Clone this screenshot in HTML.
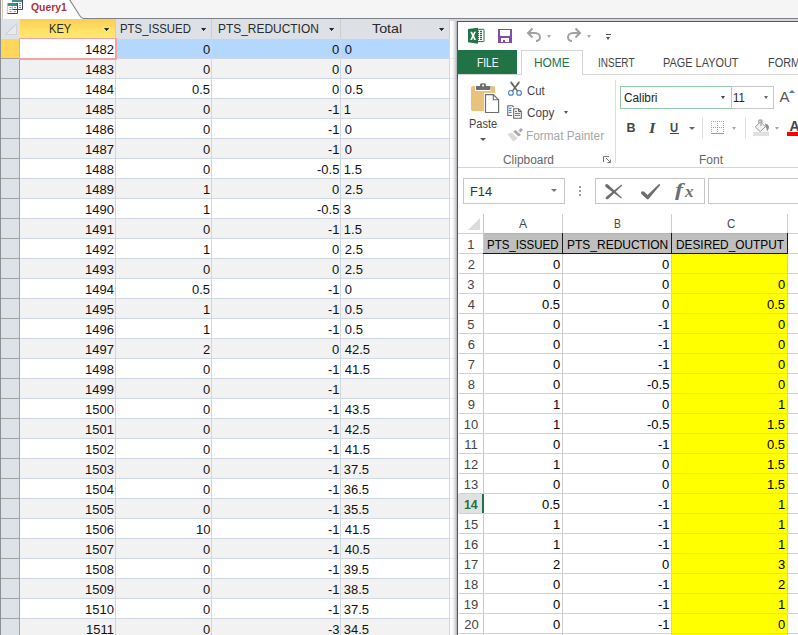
<!DOCTYPE html>
<html><head><meta charset="utf-8">
<style>
*{margin:0;padding:0;box-sizing:border-box}
html,body{width:798px;height:635px;overflow:hidden;background:#fff;font-family:"Liberation Sans",sans-serif;position:relative}
div,svg{position:absolute}
.t{white-space:nowrap;line-height:normal;transform-origin:0 0;font-family:"Liberation Sans",sans-serif}
/* ACCESS */
.ab{left:1px;width:449px;height:20px}
.rsel{left:1px;width:19px;height:20px}
.hl{left:20px;width:430px;height:1px;background:#cfd7e4}
.hls{left:1px;width:19px;height:1px;background:#a3a3a3}
.vl{top:38px;width:1px;height:597px;background:#cfd7e4}
.hdr{top:19px;height:20px;background:#dde1e6}
.dd{width:0;height:0;border-left:4px solid transparent;border-right:4px solid transparent;border-top:4px solid #2b2b2b}
/* EXCEL */
.xh{left:459px;width:339px;height:1px;background:#d2d2d2}
.xv{top:214px;width:1px;height:421px;background:#cecece}
.box{border:1px solid #c6c6c6;background:#fff}
.sm{width:0;height:0;border-left:2.5px solid transparent;border-right:2.5px solid transparent;border-top:3px solid #777}
</style></head><body>
<!-- ================= ACCESS ================= -->
<div style="left:0;top:0;width:798px;height:19px;background:#f5f5f5"></div>
<!-- tab -->
<svg style="left:0;top:0" width="100" height="19" viewBox="0 0 100 19">
  <path d="M2 0 V19 H84 C82 18.5 81 17.5 80 16 L69.5 -0.5 Z" fill="#ffffff"/>
  <path d="M69.5 -0.5 L80 16 C81 17.5 82 18.5 84 18.5 H100" fill="none" stroke="#80858b" stroke-width="1.1"/>
  <line x1="2.5" y1="0" x2="2.5" y2="19" stroke="#d9c7ad" stroke-width="1"/>
</svg>
<!-- query icon -->
<svg style="left:0;top:0" width="28" height="16" viewBox="0 0 28 16">
  <rect x="12" y="0" width="11" height="10" fill="#fff"/>
  <rect x="12" y="0" width="11" height="2" fill="#3f8f8c"/>
  <path d="M12.5 2 V9.5" stroke="#c4ccd6" stroke-width="1"/>
  <path d="M22.5 0 V9.5 H12" fill="none" stroke="#2e4a5c" stroke-width="1"/>
  <path d="M19 3.5h2M19 5.5h2M19 7.5h2" stroke="#8796aa" stroke-width="1"/>
  <rect x="7" y="3" width="11" height="11" fill="#fff" fill-opacity="0.9"/>
  <rect x="7.5" y="3" width="10" height="3" fill="#3f8f8c"/>
  <path d="M7.5 6 V13.5" stroke="#c4ccd6" stroke-width="1"/>
  <path d="M17.5 3 V13.5 H7.5" fill="none" stroke="#2e4a5c" stroke-width="1"/>
  <path d="M12.5 6 V9.5" stroke="#b8c2ce" stroke-width="1"/>
  <path d="M12.5 9.5 H17" stroke="#2e4a5c" stroke-width="1"/>
  <path d="M9.5 7.5h2M14 7.5h2M9.5 9.5h2M9.5 11.5h2M14 11.5h2" stroke="#8796aa" stroke-width="1"/>
</svg>
<div style="left:100px;top:18px;width:698px;height:1px;background:#7d8187"></div>
<!-- header -->
<div class="hdr" style="left:1px;width:19px;background:#dde2e8"></div>
<svg style="left:1px;top:19px" width="19" height="19" viewBox="0 0 19 19">
  <path d="M4.5 15.5 L15.5 5 V15.5 Z" fill="#e8eaee"/>
  <path d="M4.5 15.5 L15.5 5" stroke="#8fb7e8" stroke-width="1" stroke-dasharray="1 0.6"/>
  <path d="M5 15.5 H15.5 V5.5" stroke="#cfd3d9" stroke-width="1" fill="none"/>
</svg>
<div class="hdr" style="left:20px;width:95px;background:linear-gradient(#fdcd55,#ffe266 60%,#ffec72)"></div>
<div class="hdr" style="left:116px;width:95px"></div>
<div class="hdr" style="left:212px;width:128px"></div>
<div class="hdr" style="left:341px;width:108px"></div>
<div style="left:115px;top:19px;width:1px;height:19px;background:#c9ced6"></div>
<div style="left:211px;top:19px;width:1px;height:19px;background:#c9ced6"></div>
<div style="left:340px;top:19px;width:1px;height:19px;background:#c9ced6"></div>
<div style="left:449px;top:19px;width:1px;height:19px;background:#c9ced6"></div>




<svg style="left:100.5px;top:25px" width="12" height="9" viewBox="0 0 12 9"><path d="M2 2.6 H9.2 L5.6 6.6 Z" fill="#1e1e1e" stroke="#fff" stroke-opacity="0.8" stroke-width="1"/></svg>
<svg style="left:197.5px;top:25px" width="12" height="9" viewBox="0 0 12 9"><path d="M2 2.6 H9.2 L5.6 6.6 Z" fill="#1e1e1e" stroke="#fff" stroke-opacity="0.8" stroke-width="1"/></svg>
<svg style="left:326px;top:25px" width="12" height="9" viewBox="0 0 12 9"><path d="M2 2.6 H9.2 L5.6 6.6 Z" fill="#1e1e1e" stroke="#fff" stroke-opacity="0.8" stroke-width="1"/></svg>
<svg style="left:435.5px;top:25px" width="12" height="9" viewBox="0 0 12 9"><path d="M2 2.6 H9.2 L5.6 6.6 Z" fill="#1e1e1e" stroke="#fff" stroke-opacity="0.8" stroke-width="1"/></svg>
<!-- rows -->
<div class="ab" style="top:39px;height:19px;background:#b3d7ff"></div>
<div class="rsel" style="top:39px;height:19px;background:#ffd65c"></div>
<div class="ab" style="top:58px;background:#f2f2f2"></div>
<div class="rsel" style="top:58px;height:20px;background:#dde2e8"></div>
<div class="ab" style="top:78px;background:#ffffff"></div>
<div class="rsel" style="top:78px;height:20px;background:#dde2e8"></div>
<div class="ab" style="top:98px;background:#f2f2f2"></div>
<div class="rsel" style="top:98px;height:20px;background:#dde2e8"></div>
<div class="ab" style="top:118px;background:#ffffff"></div>
<div class="rsel" style="top:118px;height:20px;background:#dde2e8"></div>
<div class="ab" style="top:138px;background:#f2f2f2"></div>
<div class="rsel" style="top:138px;height:20px;background:#dde2e8"></div>
<div class="ab" style="top:158px;background:#ffffff"></div>
<div class="rsel" style="top:158px;height:20px;background:#dde2e8"></div>
<div class="ab" style="top:178px;background:#f2f2f2"></div>
<div class="rsel" style="top:178px;height:20px;background:#dde2e8"></div>
<div class="ab" style="top:198px;background:#ffffff"></div>
<div class="rsel" style="top:198px;height:20px;background:#dde2e8"></div>
<div class="ab" style="top:218px;background:#f2f2f2"></div>
<div class="rsel" style="top:218px;height:20px;background:#dde2e8"></div>
<div class="ab" style="top:238px;background:#ffffff"></div>
<div class="rsel" style="top:238px;height:20px;background:#dde2e8"></div>
<div class="ab" style="top:258px;background:#f2f2f2"></div>
<div class="rsel" style="top:258px;height:20px;background:#dde2e8"></div>
<div class="ab" style="top:278px;background:#ffffff"></div>
<div class="rsel" style="top:278px;height:20px;background:#dde2e8"></div>
<div class="ab" style="top:298px;background:#f2f2f2"></div>
<div class="rsel" style="top:298px;height:20px;background:#dde2e8"></div>
<div class="ab" style="top:318px;background:#ffffff"></div>
<div class="rsel" style="top:318px;height:20px;background:#dde2e8"></div>
<div class="ab" style="top:338px;background:#f2f2f2"></div>
<div class="rsel" style="top:338px;height:20px;background:#dde2e8"></div>
<div class="ab" style="top:358px;background:#ffffff"></div>
<div class="rsel" style="top:358px;height:20px;background:#dde2e8"></div>
<div class="ab" style="top:378px;background:#f2f2f2"></div>
<div class="rsel" style="top:378px;height:20px;background:#dde2e8"></div>
<div class="ab" style="top:398px;background:#ffffff"></div>
<div class="rsel" style="top:398px;height:20px;background:#dde2e8"></div>
<div class="ab" style="top:418px;background:#f2f2f2"></div>
<div class="rsel" style="top:418px;height:20px;background:#dde2e8"></div>
<div class="ab" style="top:438px;background:#ffffff"></div>
<div class="rsel" style="top:438px;height:20px;background:#dde2e8"></div>
<div class="ab" style="top:458px;background:#f2f2f2"></div>
<div class="rsel" style="top:458px;height:20px;background:#dde2e8"></div>
<div class="ab" style="top:478px;background:#ffffff"></div>
<div class="rsel" style="top:478px;height:20px;background:#dde2e8"></div>
<div class="ab" style="top:498px;background:#f2f2f2"></div>
<div class="rsel" style="top:498px;height:20px;background:#dde2e8"></div>
<div class="ab" style="top:518px;background:#ffffff"></div>
<div class="rsel" style="top:518px;height:20px;background:#dde2e8"></div>
<div class="ab" style="top:538px;background:#f2f2f2"></div>
<div class="rsel" style="top:538px;height:20px;background:#dde2e8"></div>
<div class="ab" style="top:558px;background:#ffffff"></div>
<div class="rsel" style="top:558px;height:20px;background:#dde2e8"></div>
<div class="ab" style="top:578px;background:#f2f2f2"></div>
<div class="rsel" style="top:578px;height:20px;background:#dde2e8"></div>
<div class="ab" style="top:598px;background:#ffffff"></div>
<div class="rsel" style="top:598px;height:20px;background:#dde2e8"></div>
<div class="ab" style="top:618px;background:#f2f2f2"></div>
<div class="rsel" style="top:618px;height:20px;background:#dde2e8"></div>
<div class="hl" style="top:58px"></div>
<div class="hls" style="top:58px"></div>
<div class="hl" style="top:78px"></div>
<div class="hls" style="top:78px"></div>
<div class="hl" style="top:98px"></div>
<div class="hls" style="top:98px"></div>
<div class="hl" style="top:118px"></div>
<div class="hls" style="top:118px"></div>
<div class="hl" style="top:138px"></div>
<div class="hls" style="top:138px"></div>
<div class="hl" style="top:158px"></div>
<div class="hls" style="top:158px"></div>
<div class="hl" style="top:178px"></div>
<div class="hls" style="top:178px"></div>
<div class="hl" style="top:198px"></div>
<div class="hls" style="top:198px"></div>
<div class="hl" style="top:218px"></div>
<div class="hls" style="top:218px"></div>
<div class="hl" style="top:238px"></div>
<div class="hls" style="top:238px"></div>
<div class="hl" style="top:258px"></div>
<div class="hls" style="top:258px"></div>
<div class="hl" style="top:278px"></div>
<div class="hls" style="top:278px"></div>
<div class="hl" style="top:298px"></div>
<div class="hls" style="top:298px"></div>
<div class="hl" style="top:318px"></div>
<div class="hls" style="top:318px"></div>
<div class="hl" style="top:338px"></div>
<div class="hls" style="top:338px"></div>
<div class="hl" style="top:358px"></div>
<div class="hls" style="top:358px"></div>
<div class="hl" style="top:378px"></div>
<div class="hls" style="top:378px"></div>
<div class="hl" style="top:398px"></div>
<div class="hls" style="top:398px"></div>
<div class="hl" style="top:418px"></div>
<div class="hls" style="top:418px"></div>
<div class="hl" style="top:438px"></div>
<div class="hls" style="top:438px"></div>
<div class="hl" style="top:458px"></div>
<div class="hls" style="top:458px"></div>
<div class="hl" style="top:478px"></div>
<div class="hls" style="top:478px"></div>
<div class="hl" style="top:498px"></div>
<div class="hls" style="top:498px"></div>
<div class="hl" style="top:518px"></div>
<div class="hls" style="top:518px"></div>
<div class="hl" style="top:538px"></div>
<div class="hls" style="top:538px"></div>
<div class="hl" style="top:558px"></div>
<div class="hls" style="top:558px"></div>
<div class="hl" style="top:578px"></div>
<div class="hls" style="top:578px"></div>
<div class="hl" style="top:598px"></div>
<div class="hls" style="top:598px"></div>
<div class="hl" style="top:618px"></div>
<div class="hls" style="top:618px"></div>
<div class="hl" style="top:638px"></div>
<div class="hls" style="top:638px"></div>
<div class="vl" style="left:115px"></div>
<div class="vl" style="left:211px"></div>
<div class="vl" style="left:340px"></div>
<div class="vl" style="left:449px"></div>
<div style="left:19px;top:38px;width:1px;height:597px;background:#a3a3a3"></div>
<!-- selected cell -->
<div style="left:20px;top:38px;width:95px;height:20px;background:#fff"></div>
<div style="left:19px;top:38px;width:98px;height:22px;border:1px solid #f5a3a7;border-right-width:2px;border-bottom-width:2px"></div>
<div style="left:0;top:0;width:1px;height:635px;background:#8b9096"></div>
<!-- shadow gap -->
<div style="left:450px;top:19px;width:7px;height:616px;background:linear-gradient(90deg,#ffffff 0%,#fbfbfc 35%,#dedde2 70%,#b0b0b4 100%)"></div>
<div style="left:450px;top:58px;width:7px;height:1px;background:rgba(150,170,200,0.18)"></div><div style="left:450px;top:78px;width:7px;height:1px;background:rgba(150,170,200,0.18)"></div><div style="left:450px;top:98px;width:7px;height:1px;background:rgba(150,170,200,0.18)"></div><div style="left:450px;top:118px;width:7px;height:1px;background:rgba(150,170,200,0.18)"></div><div style="left:450px;top:138px;width:7px;height:1px;background:rgba(150,170,200,0.18)"></div><div style="left:450px;top:158px;width:7px;height:1px;background:rgba(150,170,200,0.18)"></div><div style="left:450px;top:178px;width:7px;height:1px;background:rgba(150,170,200,0.18)"></div><div style="left:450px;top:198px;width:7px;height:1px;background:rgba(150,170,200,0.18)"></div><div style="left:450px;top:218px;width:7px;height:1px;background:rgba(150,170,200,0.18)"></div><div style="left:450px;top:238px;width:7px;height:1px;background:rgba(150,170,200,0.18)"></div><div style="left:450px;top:258px;width:7px;height:1px;background:rgba(150,170,200,0.18)"></div><div style="left:450px;top:278px;width:7px;height:1px;background:rgba(150,170,200,0.18)"></div><div style="left:450px;top:298px;width:7px;height:1px;background:rgba(150,170,200,0.18)"></div><div style="left:450px;top:318px;width:7px;height:1px;background:rgba(150,170,200,0.18)"></div><div style="left:450px;top:338px;width:7px;height:1px;background:rgba(150,170,200,0.18)"></div><div style="left:450px;top:358px;width:7px;height:1px;background:rgba(150,170,200,0.18)"></div><div style="left:450px;top:378px;width:7px;height:1px;background:rgba(150,170,200,0.18)"></div><div style="left:450px;top:398px;width:7px;height:1px;background:rgba(150,170,200,0.18)"></div><div style="left:450px;top:418px;width:7px;height:1px;background:rgba(150,170,200,0.18)"></div><div style="left:450px;top:438px;width:7px;height:1px;background:rgba(150,170,200,0.18)"></div><div style="left:450px;top:458px;width:7px;height:1px;background:rgba(150,170,200,0.18)"></div><div style="left:450px;top:478px;width:7px;height:1px;background:rgba(150,170,200,0.18)"></div><div style="left:450px;top:498px;width:7px;height:1px;background:rgba(150,170,200,0.18)"></div><div style="left:450px;top:518px;width:7px;height:1px;background:rgba(150,170,200,0.18)"></div><div style="left:450px;top:538px;width:7px;height:1px;background:rgba(150,170,200,0.18)"></div><div style="left:450px;top:558px;width:7px;height:1px;background:rgba(150,170,200,0.18)"></div><div style="left:450px;top:578px;width:7px;height:1px;background:rgba(150,170,200,0.18)"></div><div style="left:450px;top:598px;width:7px;height:1px;background:rgba(150,170,200,0.18)"></div><div style="left:450px;top:618px;width:7px;height:1px;background:rgba(150,170,200,0.18)"></div>

<!-- ================= EXCEL ================= -->
<div style="left:450px;top:19px;width:348px;height:2px;background:#d9d6dc"></div>
<div style="left:457px;top:21px;width:341px;height:614px;background:#fff"></div>
<div style="left:457px;top:21px;width:1px;height:614px;background:#217346"></div>
<div style="left:457px;top:21px;width:341px;height:1px;background:#217346"></div>
<!-- excel logo -->
<svg style="left:467px;top:27px" width="18" height="18" viewBox="0 0 18 18">
  <path d="M10 2.3 H16.2 Q17 2.3 17 3.1 V13.8 Q17 14.6 16.2 14.6 H10 Z" fill="#fff" stroke="#217346" stroke-width="1"/>
  <path d="M13 4.4h2M13 6.4h2M13 8.3h2M13 10.3h2M13 12.3h2M11 4.4h1M11 6.4h1M11 8.3h1M11 10.3h1M11 12.3h1" stroke="#217346" stroke-width="1.2"/>
  <path d="M1 2 L11 0.8 V16.8 L1 15.3 Z" fill="#217346"/>
  <path d="M3.2 4.7 L5.1 4.7 L6.1 7 L7.1 4.7 L9 4.7 L7.1 8.8 L9.1 12.9 L7.1 12.9 L6.1 10.6 L5.1 12.9 L3.1 12.9 L5.1 8.8 Z" fill="#fff"/>
</svg>
<!-- save -->
<svg style="left:497px;top:28px" width="16" height="16" viewBox="0 0 16 16">
  <path d="M1 1 H15 V15 H1 Z" fill="#7f4ea8"/>
  <path d="M3 2 H13 V7 Q13 8 12 8 H4 Q3 8 3 7 Z" fill="#fff"/>
  <rect x="4" y="10" width="8" height="4" fill="#fff"/>
  <rect x="6" y="12" width="2" height="2" fill="#7f4ea8"/>
</svg>
<!-- undo / redo -->
<svg style="left:526px;top:27px" width="16" height="15" viewBox="0 0 16 15">
  <path d="M2.5 6 H9 C12 6 14 8 14 10.3 C14 12.5 12.2 14 10 14" fill="none" stroke="#a0a0a0" stroke-width="2"/>
  <path d="M6.5 1.5 L2 6 L6.5 10.5" fill="none" stroke="#a0a0a0" stroke-width="2"/>
</svg>
<div class="sm" style="left:547px;top:34.5px;border-top-color:#a9a9a9"></div>
<svg style="left:566px;top:27px" width="16" height="15" viewBox="0 0 16 15">
  <path d="M13.5 6 H7 C4 6 2 8 2 10.3 C2 12.5 3.8 14 6 14" fill="none" stroke="#a0a0a0" stroke-width="2"/>
  <path d="M9.5 1.5 L14 6 L9.5 10.5" fill="none" stroke="#a0a0a0" stroke-width="2"/>
</svg>
<div class="sm" style="left:587px;top:34.5px;border-top-color:#a9a9a9"></div>
<div style="left:605.5px;top:33.5px;width:5px;height:1px;background:#555"></div>
<div class="sm" style="left:605.5px;top:36.5px;border-top-color:#555;border-top-width:3.5px"></div>
<!-- tabs -->
<div style="left:458px;top:50px;width:59px;height:24px;background:#217346"></div>
<div style="left:521px;top:50px;width:62px;height:25px;border:1px solid #d5d5d5;border-bottom:none;background:#fff"></div>
<div style="left:458px;top:74px;width:63px;height:1px;background:#d5d5d5"></div>
<div style="left:583px;top:74px;width:215px;height:1px;background:#d5d5d5"></div>
<!-- clipboard group -->
<svg style="left:468px;top:80px" width="34" height="34" viewBox="0 0 34 34">
  <rect x="3" y="6" width="24" height="25" rx="1.8" fill="#e9c27c"/>
  <rect x="7" y="5" width="15.5" height="6" fill="#fff"/>
  <path d="M8 6 H22.3 V9 Q22.3 10 21.3 10 H9 Q8 10 8 9 Z" fill="#6d6d6d"/>
  <rect x="12" y="3.2" width="6" height="4" rx="1.6" fill="#6d6d6d"/>
  <rect x="14.2" y="4.6" width="1.8" height="1.8" fill="#fff"/>
  <rect x="16" y="13" width="18" height="21" fill="#fff"/>
  <path d="M17.5 14.6 H25.3 L30.6 19.8 V32.5 H17.5 Z" fill="#fff" stroke="#6d6d6d" stroke-width="1.2"/>
  <path d="M25.3 14.6 V19.8 H30.6" fill="none" stroke="#6d6d6d" stroke-width="1.1"/>
</svg>
<div class="sm" style="left:480px;top:138px;border-left-width:3px;border-right-width:3px;border-top-color:#555"></div>
<!-- scissors -->
<svg style="left:507px;top:81px" width="16" height="16" viewBox="0 0 16 16">
  <path d="M3.2 0.6 Q4.6 0.2 5.2 1.2 L11 9.6 L10 10.4 L3.6 2.4 Z" fill="#676767"/>
  <path d="M12.8 0.6 Q11.4 0.2 10.8 1.2 L5 9.6 L6 10.4 L12.4 2.4 Z" fill="#676767"/>
  <circle cx="3.9" cy="11.9" r="2.35" fill="none" stroke="#3d7ac2" stroke-width="1.1"/>
  <circle cx="12.1" cy="11.9" r="2.35" fill="none" stroke="#3d7ac2" stroke-width="1.1"/>
</svg>
<!-- copy -->
<svg style="left:506px;top:104px" width="17" height="16" viewBox="0 0 17 16">
  <path d="M6 11.5 H1.8 V1.8 H6.4 L7.6 3" fill="none" stroke="#666" stroke-width="1.1"/>
  <path d="M3 4.3h2.5M3 6.4h2.5M3 8.4h2.5" stroke="#3d73b4" stroke-width="1"/>
  <path d="M7.7 4.7 H12.5 L15.3 7.5 V14.3 H7.7 Z" fill="#fff" stroke="#666" stroke-width="1.1"/>
  <path d="M12.5 4.7 V7.5 H15.3" fill="none" stroke="#666" stroke-width="1"/>
  <path d="M9 7.4h2M9 9.4h5M9 11.4h5" stroke="#3d73b4" stroke-width="1"/>
</svg>
<div class="sm" style="left:564px;top:111px;border-left-width:2.5px;border-right-width:2.5px;border-top-color:#555"></div>
<!-- format painter -->
<svg style="left:507px;top:127px" width="18" height="16" viewBox="0 0 18 16">
  <path d="M0.3 7 L4.4 5.7 L10.7 10.9 L6.5 14.7 Z" fill="#dcd9dd"/>
  <path d="M6.2 4.4 L8.4 3.1 L14 7.7 L11.6 9.6 Z" fill="#a9a9a9"/>
  <path d="M11.4 3.6 L14 1 L16 2.7 L13.6 5.5 Z" fill="#a9a9a9"/>
</svg>
<!-- dialog launcher -->
<svg style="left:603px;top:156px" width="9" height="7" viewBox="0 0 9 7">
  <path d="M0.5 6 V0.5 H6" fill="none" stroke="#777" stroke-width="1"/>
  <path d="M3 2 L7.5 6.5 M4.5 6.5 H7.5 V3.5" fill="none" stroke="#777" stroke-width="1"/>
</svg>
<div style="left:615px;top:80px;width:1px;height:83px;background:#dedede"></div>
<!-- font group -->
<div style="left:620px;top:86px;width:112px;height:23px;border:1px solid #95c8a8;background:#fff"></div>
<div style="left:731px;top:86px;width:43px;height:23px;border:1px solid #c6c6c6;background:#fff"></div>
<div class="sm" style="left:721px;top:96px;border-top-color:#444;border-left-width:2.5px;border-right-width:2.5px"></div>
<div class="sm" style="left:764px;top:96px;border-top-color:#666;border-left-width:2.5px;border-right-width:2.5px"></div>
<div class="t" style="left:779.5px;top:88px;font-size:15px;color:#555">A</div>
<div class="sm" style="left:788.5px;top:89.5px;border-top:none;border-bottom:3.5px solid #3a7cc8;border-left-width:3px;border-right-width:3px"></div>
<div class="t" style="left:626.5px;top:121px;font-size:12.5px;font-weight:bold;color:#474747">B</div>
<div class="t" style="left:648.5px;top:120px;font-size:14.5px;font-weight:bold;font-style:italic;font-family:'Liberation Serif',serif;color:#474747;transform:scaleX(1.15)">I</div>
<div class="t" style="left:670px;top:121px;font-size:12.5px;font-weight:bold;color:#474747;transform:scaleX(0.9)">U</div>
<div style="left:670px;top:133px;width:9px;height:1px;background:#474747"></div>
<div class="sm" style="left:688.5px;top:127px;border-top-color:#666;border-left-width:3px;border-right-width:3px"></div>
<div style="left:702px;top:117px;width:1px;height:22px;background:#dedede"></div>
<svg style="left:706px;top:114px" width="22" height="22" viewBox="0 0 22 22"><g fill="#a89fb4"><rect x="5" y="7" width="1" height="1"/><rect x="7" y="7" width="1" height="1"/><rect x="9" y="7" width="1" height="1"/><rect x="11" y="7" width="1" height="1"/><rect x="13" y="7" width="1" height="1"/><rect x="15" y="7" width="1" height="1"/><rect x="17" y="7" width="1" height="1"/><rect x="5" y="13" width="1" height="1"/><rect x="7" y="13" width="1" height="1"/><rect x="9" y="13" width="1" height="1"/><rect x="11" y="13" width="1" height="1"/><rect x="13" y="13" width="1" height="1"/><rect x="15" y="13" width="1" height="1"/><rect x="17" y="13" width="1" height="1"/><rect x="5" y="9" width="1" height="1"/><rect x="5" y="11" width="1" height="1"/><rect x="5" y="15" width="1" height="1"/><rect x="5" y="17" width="1" height="1"/><rect x="11" y="9" width="1" height="1"/><rect x="11" y="11" width="1" height="1"/><rect x="11" y="15" width="1" height="1"/><rect x="11" y="17" width="1" height="1"/><rect x="17" y="9" width="1" height="1"/><rect x="17" y="11" width="1" height="1"/><rect x="17" y="15" width="1" height="1"/><rect x="17" y="17" width="1" height="1"/></g><rect x="5" y="19" width="13" height="1" fill="#9d9d9d"/></svg>
<div class="sm" style="left:732px;top:127px;border-top-color:#aaa;border-left-width:2.5px;border-right-width:2.5px"></div>
<div style="left:745px;top:117px;width:1px;height:22px;background:#dedede"></div>
<svg style="left:752px;top:118px" width="18" height="19" viewBox="0 0 18 19">
  <path d="M3.2 8.9 L8.5 3.8 L13.4 8.7 L8.2 13.6 Z" fill="#f6f2f6" stroke="#999" stroke-width="1"/>
  <path d="M6.8 5.6 V2.8 Q6.8 2.1 7.5 2.1 H9.3 Q10 2.1 10 2.8 V4.6" fill="none" stroke="#999" stroke-width="1.1"/>
  <path d="M9 3.5 V8" stroke="#999" stroke-width="1"/>
  <path d="M13 5.6 Q15.6 5.6 17 8.6 Q17.2 11.2 15 13.6 Q15 10.6 13.4 8.7 Z" fill="#8e8e8e"/>
  <rect x="1" y="14" width="16" height="4" fill="#e4dfe4"/>
</svg>
<div class="sm" style="left:775px;top:127px;border-top-color:#aaa;border-left-width:2.5px;border-right-width:2.5px"></div>
<div class="t" style="left:789.5px;top:118px;font-size:14px;font-weight:bold;color:#444">A</div>
<div style="left:787px;top:132px;width:11px;height:4px;background:#ff0000"></div>
<!-- ribbon bottom -->
<div style="left:458px;top:167px;width:340px;height:1px;background:#d5d5d5"></div>
<!-- formula bar -->
<div class="box" style="left:463px;top:178px;width:102px;height:26px"></div>
<div class="sm" style="left:551px;top:188.5px;border-top-color:#777;border-left-width:3.5px;border-right-width:3.5px;border-top-width:3.5px"></div>
<div style="left:579px;top:186px;width:2px;height:2px;background:#999"></div>
<div style="left:579px;top:190px;width:2px;height:2px;background:#999"></div>
<div style="left:579px;top:194px;width:2px;height:2px;background:#999"></div>
<div class="box" style="left:595px;top:178px;width:110px;height:26px"></div>
<div class="box" style="left:708px;top:178px;width:95px;height:26px"></div>
<svg style="left:603px;top:182px" width="60" height="20" viewBox="0 0 60 20">
  <path d="M2.4 2.6 Q3.8 1.6 5 2.4 L18.8 15.6 L18.2 16.6 L2.4 4.8 Z" fill="#6e6e6e"/>
  <path d="M18.4 2.4 L19.2 3.4 L5.4 16.8 Q3.6 18 2.6 16.6 Q2.4 15.4 3.6 14.4 Z" fill="#6e6e6e"/>
  <path d="M38.2 10 Q39.5 8.4 41.2 9.8 L44.6 12.9 L55.4 2.4 Q56.8 1.6 57.2 3 L45.8 16.8 Q44.8 17.8 43.6 16.8 L38.4 12 Q37.6 11 38.2 10 Z" fill="#6e6e6e"/>
</svg>
<div class="t" style="left:675px;top:179px;font-size:19.5px;font-weight:bold;font-style:italic;font-family:'Liberation Serif',serif;color:#6e6e6e;transform:scaleX(1.25)">f</div>
<div class="t" style="left:685px;top:182px;font-size:17px;font-weight:bold;font-style:italic;font-family:'Liberation Serif',serif;color:#6e6e6e">x</div>
<!-- grid -->
<div style="left:458px;top:214px;width:340px;height:20px;background:#fff"></div>
<svg style="left:466px;top:216px" width="16" height="16" viewBox="0 0 16 16">
  <path d="M2 14 L14 2 V14 Z" fill="#dcdcdc"/>
</svg>
<div style="left:458px;top:233px;width:340px;height:1px;background:#bdbdbd"></div>
<div style="left:672px;top:254px;width:115px;height:381px;background:#ffff00"></div>
<div class="xv" style="left:483px;background:#c8c8c8"></div>
<div class="xv" style="left:562px"></div>
<div class="xv" style="left:671px"></div>
<div class="xv" style="left:787px"></div>
<div class="xh" style="top:253px"></div>
<div class="xh" style="top:273px"></div>
<div class="xh" style="top:293px"></div>
<div class="xh" style="top:313px"></div>
<div class="xh" style="top:333px"></div>
<div class="xh" style="top:353px"></div>
<div class="xh" style="top:373px"></div>
<div class="xh" style="top:393px"></div>
<div class="xh" style="top:413px"></div>
<div class="xh" style="top:433px"></div>
<div class="xh" style="top:453px"></div>
<div class="xh" style="top:473px"></div>
<div class="xh" style="top:493px"></div>
<div class="xh" style="top:513px"></div>
<div class="xh" style="top:533px"></div>
<div class="xh" style="top:553px"></div>
<div class="xh" style="top:573px"></div>
<div class="xh" style="top:593px"></div>
<div class="xh" style="top:613px"></div>
<div class="xh" style="top:633px"></div>
<!-- row1 headers -->
<div style="left:484px;top:234px;width:303px;height:19px;background:#bfbfbf"></div>
<div style="left:458px;top:233px;width:340px;height:1px;background:#d2d2d2"></div><div style="left:484px;top:233px;width:304px;height:1px;background:#b0b0b0"></div>
<div style="left:483px;top:253px;width:305px;height:1px;background:#1a1a1a"></div>
<div style="left:562px;top:233px;width:1px;height:21px;background:#1a1a1a"></div>
<div style="left:671px;top:233px;width:1px;height:21px;background:#1a1a1a"></div>
<div style="left:787px;top:233px;width:1px;height:21px;background:#1a1a1a"></div>
<!-- row 14 header -->
<div style="left:458px;top:494px;width:24px;height:19px;background:#e1e1e1"></div>
<div style="left:482px;top:494px;width:2px;height:19px;background:#217346"></div>
<div class="t" style="left:31.00px;top:1.00px;font-size:10.5px;color:#a8343a;font-weight:bold;transform:scaleX(0.9889);">Query1</div>
<div class="t" style="left:48.54px;top:21.10px;font-size:13px;color:#2a2a2a;transform:scaleX(0.8560);">KEY</div>
<div class="t" style="left:120.02px;top:21.10px;font-size:13px;color:#2a2a2a;transform:scaleX(0.8762);">PTS_ISSUED</div>
<div class="t" style="left:217.88px;top:21.10px;font-size:13px;color:#2a2a2a;transform:scaleX(0.9185);">PTS_REDUCTION</div>
<div class="t" style="left:372.30px;top:21.10px;font-size:13px;color:#2a2a2a;transform:scaleX(1.1000);">Total</div>
<div class="t" style="left:85.00px;top:42.00px;font-size:13px;color:#111;">1482</div>
<div class="t" style="left:203.00px;top:42.00px;font-size:13px;color:#111;">0</div>
<div class="t" style="left:332.00px;top:42.00px;font-size:13px;color:#111;">0</div>
<div class="t" style="left:344.80px;top:42.00px;font-size:13px;color:#111;">0</div>
<div class="t" style="left:85.00px;top:62.00px;font-size:13px;color:#111;">1483</div>
<div class="t" style="left:203.00px;top:62.00px;font-size:13px;color:#111;">0</div>
<div class="t" style="left:332.00px;top:62.00px;font-size:13px;color:#111;">0</div>
<div class="t" style="left:344.80px;top:62.00px;font-size:13px;color:#111;">0</div>
<div class="t" style="left:85.00px;top:82.00px;font-size:13px;color:#111;">1484</div>
<div class="t" style="left:192.00px;top:82.00px;font-size:13px;color:#111;">0.5</div>
<div class="t" style="left:332.00px;top:82.00px;font-size:13px;color:#111;">0</div>
<div class="t" style="left:344.80px;top:82.00px;font-size:13px;color:#111;">0.5</div>
<div class="t" style="left:85.00px;top:102.00px;font-size:13px;color:#111;">1485</div>
<div class="t" style="left:203.00px;top:102.00px;font-size:13px;color:#111;">0</div>
<div class="t" style="left:328.00px;top:102.00px;font-size:13px;color:#111;">-1</div>
<div class="t" style="left:343.80px;top:102.00px;font-size:13px;color:#111;">1</div>
<div class="t" style="left:85.00px;top:122.00px;font-size:13px;color:#111;">1486</div>
<div class="t" style="left:203.00px;top:122.00px;font-size:13px;color:#111;">0</div>
<div class="t" style="left:328.00px;top:122.00px;font-size:13px;color:#111;">-1</div>
<div class="t" style="left:344.80px;top:122.00px;font-size:13px;color:#111;">0</div>
<div class="t" style="left:85.00px;top:142.00px;font-size:13px;color:#111;">1487</div>
<div class="t" style="left:203.00px;top:142.00px;font-size:13px;color:#111;">0</div>
<div class="t" style="left:328.00px;top:142.00px;font-size:13px;color:#111;">-1</div>
<div class="t" style="left:344.80px;top:142.00px;font-size:13px;color:#111;">0</div>
<div class="t" style="left:85.00px;top:162.00px;font-size:13px;color:#111;">1488</div>
<div class="t" style="left:203.00px;top:162.00px;font-size:13px;color:#111;">0</div>
<div class="t" style="left:317.00px;top:162.00px;font-size:13px;color:#111;">-0.5</div>
<div class="t" style="left:343.80px;top:162.00px;font-size:13px;color:#111;">1.5</div>
<div class="t" style="left:85.00px;top:182.00px;font-size:13px;color:#111;">1489</div>
<div class="t" style="left:203.00px;top:182.00px;font-size:13px;color:#111;">1</div>
<div class="t" style="left:332.00px;top:182.00px;font-size:13px;color:#111;">0</div>
<div class="t" style="left:344.80px;top:182.00px;font-size:13px;color:#111;">2.5</div>
<div class="t" style="left:85.00px;top:202.00px;font-size:13px;color:#111;">1490</div>
<div class="t" style="left:203.00px;top:202.00px;font-size:13px;color:#111;">1</div>
<div class="t" style="left:317.00px;top:202.00px;font-size:13px;color:#111;">-0.5</div>
<div class="t" style="left:343.80px;top:202.00px;font-size:13px;color:#111;">3</div>
<div class="t" style="left:85.00px;top:222.00px;font-size:13px;color:#111;">1491</div>
<div class="t" style="left:203.00px;top:222.00px;font-size:13px;color:#111;">0</div>
<div class="t" style="left:328.00px;top:222.00px;font-size:13px;color:#111;">-1</div>
<div class="t" style="left:343.80px;top:222.00px;font-size:13px;color:#111;">1.5</div>
<div class="t" style="left:85.00px;top:242.00px;font-size:13px;color:#111;">1492</div>
<div class="t" style="left:203.00px;top:242.00px;font-size:13px;color:#111;">1</div>
<div class="t" style="left:332.00px;top:242.00px;font-size:13px;color:#111;">0</div>
<div class="t" style="left:344.80px;top:242.00px;font-size:13px;color:#111;">2.5</div>
<div class="t" style="left:85.00px;top:262.00px;font-size:13px;color:#111;">1493</div>
<div class="t" style="left:203.00px;top:262.00px;font-size:13px;color:#111;">0</div>
<div class="t" style="left:332.00px;top:262.00px;font-size:13px;color:#111;">0</div>
<div class="t" style="left:344.80px;top:262.00px;font-size:13px;color:#111;">2.5</div>
<div class="t" style="left:85.00px;top:282.00px;font-size:13px;color:#111;">1494</div>
<div class="t" style="left:192.00px;top:282.00px;font-size:13px;color:#111;">0.5</div>
<div class="t" style="left:328.00px;top:282.00px;font-size:13px;color:#111;">-1</div>
<div class="t" style="left:344.80px;top:282.00px;font-size:13px;color:#111;">0</div>
<div class="t" style="left:85.00px;top:302.00px;font-size:13px;color:#111;">1495</div>
<div class="t" style="left:203.00px;top:302.00px;font-size:13px;color:#111;">1</div>
<div class="t" style="left:328.00px;top:302.00px;font-size:13px;color:#111;">-1</div>
<div class="t" style="left:344.80px;top:302.00px;font-size:13px;color:#111;">0.5</div>
<div class="t" style="left:85.00px;top:322.00px;font-size:13px;color:#111;">1496</div>
<div class="t" style="left:203.00px;top:322.00px;font-size:13px;color:#111;">1</div>
<div class="t" style="left:328.00px;top:322.00px;font-size:13px;color:#111;">-1</div>
<div class="t" style="left:344.80px;top:322.00px;font-size:13px;color:#111;">0.5</div>
<div class="t" style="left:85.00px;top:342.00px;font-size:13px;color:#111;">1497</div>
<div class="t" style="left:203.00px;top:342.00px;font-size:13px;color:#111;">2</div>
<div class="t" style="left:332.00px;top:342.00px;font-size:13px;color:#111;">0</div>
<div class="t" style="left:344.80px;top:342.00px;font-size:13px;color:#111;">42.5</div>
<div class="t" style="left:85.00px;top:362.00px;font-size:13px;color:#111;">1498</div>
<div class="t" style="left:203.00px;top:362.00px;font-size:13px;color:#111;">0</div>
<div class="t" style="left:328.00px;top:362.00px;font-size:13px;color:#111;">-1</div>
<div class="t" style="left:344.80px;top:362.00px;font-size:13px;color:#111;">41.5</div>
<div class="t" style="left:85.00px;top:382.00px;font-size:13px;color:#111;">1499</div>
<div class="t" style="left:203.00px;top:382.00px;font-size:13px;color:#111;">0</div>
<div class="t" style="left:328.00px;top:382.00px;font-size:13px;color:#111;">-1</div>
<div class="t" style="left:85.00px;top:402.00px;font-size:13px;color:#111;">1500</div>
<div class="t" style="left:203.00px;top:402.00px;font-size:13px;color:#111;">0</div>
<div class="t" style="left:328.00px;top:402.00px;font-size:13px;color:#111;">-1</div>
<div class="t" style="left:344.80px;top:402.00px;font-size:13px;color:#111;">43.5</div>
<div class="t" style="left:85.00px;top:422.00px;font-size:13px;color:#111;">1501</div>
<div class="t" style="left:203.00px;top:422.00px;font-size:13px;color:#111;">0</div>
<div class="t" style="left:328.00px;top:422.00px;font-size:13px;color:#111;">-1</div>
<div class="t" style="left:344.80px;top:422.00px;font-size:13px;color:#111;">42.5</div>
<div class="t" style="left:85.00px;top:442.00px;font-size:13px;color:#111;">1502</div>
<div class="t" style="left:203.00px;top:442.00px;font-size:13px;color:#111;">0</div>
<div class="t" style="left:328.00px;top:442.00px;font-size:13px;color:#111;">-1</div>
<div class="t" style="left:344.80px;top:442.00px;font-size:13px;color:#111;">41.5</div>
<div class="t" style="left:85.00px;top:462.00px;font-size:13px;color:#111;">1503</div>
<div class="t" style="left:203.00px;top:462.00px;font-size:13px;color:#111;">0</div>
<div class="t" style="left:328.00px;top:462.00px;font-size:13px;color:#111;">-1</div>
<div class="t" style="left:343.80px;top:462.00px;font-size:13px;color:#111;">37.5</div>
<div class="t" style="left:85.00px;top:482.00px;font-size:13px;color:#111;">1504</div>
<div class="t" style="left:203.00px;top:482.00px;font-size:13px;color:#111;">0</div>
<div class="t" style="left:328.00px;top:482.00px;font-size:13px;color:#111;">-1</div>
<div class="t" style="left:343.80px;top:482.00px;font-size:13px;color:#111;">36.5</div>
<div class="t" style="left:85.00px;top:502.00px;font-size:13px;color:#111;">1505</div>
<div class="t" style="left:203.00px;top:502.00px;font-size:13px;color:#111;">0</div>
<div class="t" style="left:328.00px;top:502.00px;font-size:13px;color:#111;">-1</div>
<div class="t" style="left:343.80px;top:502.00px;font-size:13px;color:#111;">35.5</div>
<div class="t" style="left:85.00px;top:522.00px;font-size:13px;color:#111;">1506</div>
<div class="t" style="left:196.00px;top:522.00px;font-size:13px;color:#111;">10</div>
<div class="t" style="left:328.00px;top:522.00px;font-size:13px;color:#111;">-1</div>
<div class="t" style="left:344.80px;top:522.00px;font-size:13px;color:#111;">41.5</div>
<div class="t" style="left:85.00px;top:542.00px;font-size:13px;color:#111;">1507</div>
<div class="t" style="left:203.00px;top:542.00px;font-size:13px;color:#111;">0</div>
<div class="t" style="left:328.00px;top:542.00px;font-size:13px;color:#111;">-1</div>
<div class="t" style="left:344.80px;top:542.00px;font-size:13px;color:#111;">40.5</div>
<div class="t" style="left:85.00px;top:562.00px;font-size:13px;color:#111;">1508</div>
<div class="t" style="left:203.00px;top:562.00px;font-size:13px;color:#111;">0</div>
<div class="t" style="left:328.00px;top:562.00px;font-size:13px;color:#111;">-1</div>
<div class="t" style="left:343.80px;top:562.00px;font-size:13px;color:#111;">39.5</div>
<div class="t" style="left:85.00px;top:582.00px;font-size:13px;color:#111;">1509</div>
<div class="t" style="left:203.00px;top:582.00px;font-size:13px;color:#111;">0</div>
<div class="t" style="left:328.00px;top:582.00px;font-size:13px;color:#111;">-1</div>
<div class="t" style="left:343.80px;top:582.00px;font-size:13px;color:#111;">38.5</div>
<div class="t" style="left:85.00px;top:602.00px;font-size:13px;color:#111;">1510</div>
<div class="t" style="left:203.00px;top:602.00px;font-size:13px;color:#111;">0</div>
<div class="t" style="left:328.00px;top:602.00px;font-size:13px;color:#111;">-1</div>
<div class="t" style="left:343.80px;top:602.00px;font-size:13px;color:#111;">37.5</div>
<div class="t" style="left:86.00px;top:622.00px;font-size:13px;color:#111;">1511</div>
<div class="t" style="left:203.00px;top:622.00px;font-size:13px;color:#111;">0</div>
<div class="t" style="left:328.00px;top:622.00px;font-size:13px;color:#111;">-3</div>
<div class="t" style="left:343.80px;top:622.00px;font-size:13px;color:#111;">34.5</div>
<div class="t" style="left:476.58px;top:56.20px;font-size:12.5px;color:#fff;transform:scaleX(0.8160);">FILE</div>
<div class="t" style="left:533.65px;top:56.20px;font-size:12.5px;color:#217346;transform:scaleX(0.9528);">HOME</div>
<div class="t" style="left:597.50px;top:56.20px;font-size:12.5px;color:#444;transform:scaleX(0.8000);">INSERT</div>
<div class="t" style="left:663.43px;top:56.20px;font-size:12.5px;color:#444;transform:scaleX(0.8741);">PAGE LAYOUT</div>
<div class="t" style="left:767.63px;top:56.20px;font-size:12.5px;color:#444;transform:scaleX(0.8741);">FORMULAS</div>
<div class="t" style="left:469.12px;top:117.00px;font-size:12.5px;color:#444;transform:scaleX(0.8806);">Paste</div>
<div class="t" style="left:526.50px;top:83.60px;font-size:12.5px;color:#444;transform:scaleX(0.9100);">Cut</div>
<div class="t" style="left:526.50px;top:106.00px;font-size:12.5px;color:#444;transform:scaleX(0.9379);">Copy</div>
<div class="t" style="left:525.55px;top:129.00px;font-size:12.5px;color:#a6a6a6;transform:scaleX(0.9451);">Format Painter</div>
<div class="t" style="left:503.30px;top:153.00px;font-size:12.5px;color:#666;transform:scaleX(0.9528);">Clipboard</div>
<div class="t" style="left:698.54px;top:152.80px;font-size:12.5px;color:#666;transform:scaleX(0.9625);">Font</div>
<div class="t" style="left:623.70px;top:90.80px;font-size:12.5px;color:#222;transform:scaleX(0.9457);">Calibri</div>
<div class="t" style="left:733.49px;top:90.80px;font-size:12.5px;color:#222;transform:scaleX(0.9083);">11</div>
<div class="t" style="left:469.58px;top:185.00px;font-size:12.5px;color:#333;transform:scaleX(1.0200);">F14</div>
<div class="t" style="left:519.00px;top:217.20px;font-size:12.5px;color:#444;transform:scaleX(0.9625);">A</div>
<div class="t" style="left:613.77px;top:217.20px;font-size:12.5px;color:#444;transform:scaleX(0.8286);">B</div>
<div class="t" style="left:726.60px;top:217.20px;font-size:12.5px;color:#444;transform:scaleX(0.9250);">C</div>
<div class="t" style="left:486.72px;top:237.30px;font-size:13px;color:#000;transform:scaleX(0.8837);">PTS_ISSUED</div>
<div class="t" style="left:566.78px;top:237.30px;font-size:13px;color:#000;transform:scaleX(0.9222);">PTS_REDUCTION</div>
<div class="t" style="left:676.09px;top:237.30px;font-size:13px;color:#000;transform:scaleX(0.9111);">DESIRED_OUTPUT</div>
<div class="t" style="left:467.20px;top:237.30px;font-size:13px;color:#444;">1</div>
<div class="t" style="left:467.70px;top:257.30px;font-size:13px;color:#444;">2</div>
<div class="t" style="left:553.00px;top:257.30px;font-size:13px;color:#000;">0</div>
<div class="t" style="left:662.00px;top:257.30px;font-size:13px;color:#000;">0</div>
<div class="t" style="left:467.20px;top:277.30px;font-size:13px;color:#444;">3</div>
<div class="t" style="left:553.00px;top:277.30px;font-size:13px;color:#000;">0</div>
<div class="t" style="left:662.00px;top:277.30px;font-size:13px;color:#000;">0</div>
<div class="t" style="left:778.00px;top:277.30px;font-size:13px;color:#000;">0</div>
<div class="t" style="left:467.70px;top:297.30px;font-size:13px;color:#444;">4</div>
<div class="t" style="left:542.00px;top:297.30px;font-size:13px;color:#000;">0.5</div>
<div class="t" style="left:662.00px;top:297.30px;font-size:13px;color:#000;">0</div>
<div class="t" style="left:767.00px;top:297.30px;font-size:13px;color:#000;">0.5</div>
<div class="t" style="left:467.20px;top:317.30px;font-size:13px;color:#444;">5</div>
<div class="t" style="left:553.00px;top:317.30px;font-size:13px;color:#000;">0</div>
<div class="t" style="left:658.00px;top:317.30px;font-size:13px;color:#000;">-1</div>
<div class="t" style="left:778.00px;top:317.30px;font-size:13px;color:#000;">0</div>
<div class="t" style="left:467.70px;top:337.30px;font-size:13px;color:#444;">6</div>
<div class="t" style="left:553.00px;top:337.30px;font-size:13px;color:#000;">0</div>
<div class="t" style="left:658.00px;top:337.30px;font-size:13px;color:#000;">-1</div>
<div class="t" style="left:778.00px;top:337.30px;font-size:13px;color:#000;">0</div>
<div class="t" style="left:467.70px;top:357.30px;font-size:13px;color:#444;">7</div>
<div class="t" style="left:553.00px;top:357.30px;font-size:13px;color:#000;">0</div>
<div class="t" style="left:658.00px;top:357.30px;font-size:13px;color:#000;">-1</div>
<div class="t" style="left:778.00px;top:357.30px;font-size:13px;color:#000;">0</div>
<div class="t" style="left:467.70px;top:377.30px;font-size:13px;color:#444;">8</div>
<div class="t" style="left:553.00px;top:377.30px;font-size:13px;color:#000;">0</div>
<div class="t" style="left:647.00px;top:377.30px;font-size:13px;color:#000;">-0.5</div>
<div class="t" style="left:778.00px;top:377.30px;font-size:13px;color:#000;">0</div>
<div class="t" style="left:467.70px;top:397.30px;font-size:13px;color:#444;">9</div>
<div class="t" style="left:553.00px;top:397.30px;font-size:13px;color:#000;">1</div>
<div class="t" style="left:662.00px;top:397.30px;font-size:13px;color:#000;">0</div>
<div class="t" style="left:778.00px;top:397.30px;font-size:13px;color:#000;">1</div>
<div class="t" style="left:463.70px;top:417.30px;font-size:13px;color:#444;">10</div>
<div class="t" style="left:553.00px;top:417.30px;font-size:13px;color:#000;">1</div>
<div class="t" style="left:647.00px;top:417.30px;font-size:13px;color:#000;">-0.5</div>
<div class="t" style="left:767.00px;top:417.30px;font-size:13px;color:#000;">1.5</div>
<div class="t" style="left:464.20px;top:437.30px;font-size:13px;color:#444;">11</div>
<div class="t" style="left:553.00px;top:437.30px;font-size:13px;color:#000;">0</div>
<div class="t" style="left:658.00px;top:437.30px;font-size:13px;color:#000;">-1</div>
<div class="t" style="left:767.00px;top:437.30px;font-size:13px;color:#000;">0.5</div>
<div class="t" style="left:463.70px;top:457.30px;font-size:13px;color:#444;">12</div>
<div class="t" style="left:553.00px;top:457.30px;font-size:13px;color:#000;">1</div>
<div class="t" style="left:662.00px;top:457.30px;font-size:13px;color:#000;">0</div>
<div class="t" style="left:767.00px;top:457.30px;font-size:13px;color:#000;">1.5</div>
<div class="t" style="left:463.70px;top:477.30px;font-size:13px;color:#444;">13</div>
<div class="t" style="left:553.00px;top:477.30px;font-size:13px;color:#000;">0</div>
<div class="t" style="left:662.00px;top:477.30px;font-size:13px;color:#000;">0</div>
<div class="t" style="left:767.00px;top:477.30px;font-size:13px;color:#000;">1.5</div>
<div class="t" style="left:464.05px;top:497.30px;font-size:13px;color:#217346;font-weight:bold;transform:scaleX(0.9500);">14</div>
<div class="t" style="left:542.00px;top:497.30px;font-size:13px;color:#000;">0.5</div>
<div class="t" style="left:658.00px;top:497.30px;font-size:13px;color:#000;">-1</div>
<div class="t" style="left:778.00px;top:497.30px;font-size:13px;color:#000;">1</div>
<div class="t" style="left:463.70px;top:517.30px;font-size:13px;color:#444;">15</div>
<div class="t" style="left:553.00px;top:517.30px;font-size:13px;color:#000;">1</div>
<div class="t" style="left:658.00px;top:517.30px;font-size:13px;color:#000;">-1</div>
<div class="t" style="left:778.00px;top:517.30px;font-size:13px;color:#000;">1</div>
<div class="t" style="left:463.70px;top:537.30px;font-size:13px;color:#444;">16</div>
<div class="t" style="left:553.00px;top:537.30px;font-size:13px;color:#000;">1</div>
<div class="t" style="left:658.00px;top:537.30px;font-size:13px;color:#000;">-1</div>
<div class="t" style="left:778.00px;top:537.30px;font-size:13px;color:#000;">1</div>
<div class="t" style="left:463.70px;top:557.30px;font-size:13px;color:#444;">17</div>
<div class="t" style="left:553.00px;top:557.30px;font-size:13px;color:#000;">2</div>
<div class="t" style="left:662.00px;top:557.30px;font-size:13px;color:#000;">0</div>
<div class="t" style="left:778.00px;top:557.30px;font-size:13px;color:#000;">3</div>
<div class="t" style="left:463.70px;top:577.30px;font-size:13px;color:#444;">18</div>
<div class="t" style="left:553.00px;top:577.30px;font-size:13px;color:#000;">0</div>
<div class="t" style="left:658.00px;top:577.30px;font-size:13px;color:#000;">-1</div>
<div class="t" style="left:778.00px;top:577.30px;font-size:13px;color:#000;">2</div>
<div class="t" style="left:463.70px;top:597.30px;font-size:13px;color:#444;">19</div>
<div class="t" style="left:553.00px;top:597.30px;font-size:13px;color:#000;">0</div>
<div class="t" style="left:658.00px;top:597.30px;font-size:13px;color:#000;">-1</div>
<div class="t" style="left:778.00px;top:597.30px;font-size:13px;color:#000;">1</div>
<div class="t" style="left:464.20px;top:617.30px;font-size:13px;color:#444;">20</div>
<div class="t" style="left:553.00px;top:617.30px;font-size:13px;color:#000;">0</div>
<div class="t" style="left:658.00px;top:617.30px;font-size:13px;color:#000;">-1</div>
<div class="t" style="left:778.00px;top:617.30px;font-size:13px;color:#000;">0</div>
</body></html>
